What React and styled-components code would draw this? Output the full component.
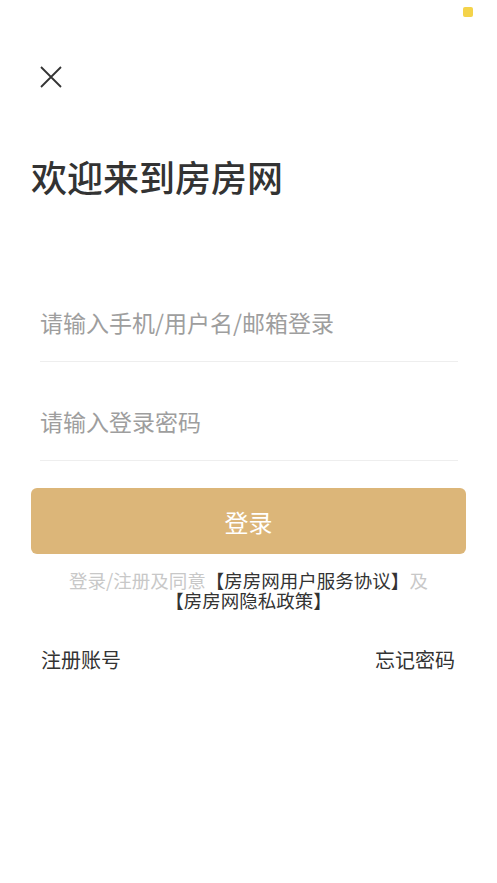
import React from "react";
import styled, { createGlobalStyle } from "styled-components";

const GlobalStyle = createGlobalStyle`
  html, body {
    margin: 0;
    padding: 0;
    background: #fff;
  }
  body {
    font-family: "Noto Sans CJK SC", "Noto Sans", sans-serif;
  }
`;

const CloseIcon = () => (
  <svg width="22" height="22" viewBox="0 0 22 22">
    <path d="M1 1 L21 21 M21 1 L1 21" stroke="#333" strokeWidth="1.8" fill="none" />
  </svg>
);

const App = () => {
  return (
    <Page>
      <GlobalStyle />
      <StatusDot />
      <CloseButton>
        <CloseIcon />
      </CloseButton>
      <Title>欢迎来到房房网</Title>

      <Form>
        <Field>
          <Input placeholder="请输入手机/用户名/邮箱登录" />
        </Field>
        <Field>
          <Input type="password" placeholder="请输入登录密码" />
        </Field>
        <LoginButton>登录</LoginButton>
      </Form>

      <Agreement>
        <Line>
          登录/注册及同意<Link>【房房网用户服务协议】</Link>及
        </Line>
        <Line>
          <Link>【房房网隐私政策】</Link>
        </Line>
      </Agreement>

      <Footer>
        <FooterLink>注册账号</FooterLink>
        <FooterLink>忘记密码</FooterLink>
      </Footer>
    </Page>
  );
};

const Page = styled.div`
  position: relative;
  width: 497px;
  min-height: 883px;
  box-sizing: border-box;
  padding: 66px 31px 0 31px;
  background: #fff;
`;

const StatusDot = styled.div`
  position: absolute;
  top: 7px;
  left: 463px;
  width: 10px;
  height: 10px;
  border-radius: 2px;
  background: #f4d34a;
`;

const CloseButton = styled.div`
  display: flex;
  width: 22px;
  height: 22px;
  margin-left: 9px;
`;

const Title = styled.h1`
  margin: 70px 0 0 0;
  font-size: 36px;
  line-height: 36px;
  font-weight: 500;
  color: #333;
`;

const Form = styled.div`
  display: flex;
  flex-direction: column;
  margin-top: 94px;
`;

const Field = styled.div`
  display: flex;
  align-items: center;
  box-sizing: border-box;
  height: 74px;
  padding-bottom: 6px;
  margin: 0 8px 25px 9px;
  border-bottom: 1px solid #eeeeee;
`;

const Input = styled.input`
  flex: 1;
  border: none;
  outline: none;
  padding: 0;
  background: transparent;
  font-family: "Noto Sans CJK SC", sans-serif;
  font-size: 23px;
  color: #333;

  &::placeholder {
    color: #9e9e9e;
  }
`;

const LoginButton = styled.div`
  display: flex;
  align-items: center;
  justify-content: center;
  height: 66px;
  margin-top: 2px;
  border-radius: 6px;
  background: #dcb679;
  color: #fff;
  font-size: 24px;
`;

const Agreement = styled.div`
  display: flex;
  flex-direction: column;
  align-items: center;
  margin-top: 16px;
  font-size: 18.5px;
  color: #c8c8c8;
`;

const Line = styled.div`
  height: 20px;
  line-height: 20px;
  white-space: nowrap;
`;

const Link = styled.span`
  color: #333;
`;

const Footer = styled.div`
  display: flex;
  justify-content: space-between;
  margin: 38px 11px 0 10px;
`;

const FooterLink = styled.span`
  font-size: 20px;
  line-height: 24px;
  color: #333;
`;

export default App;
